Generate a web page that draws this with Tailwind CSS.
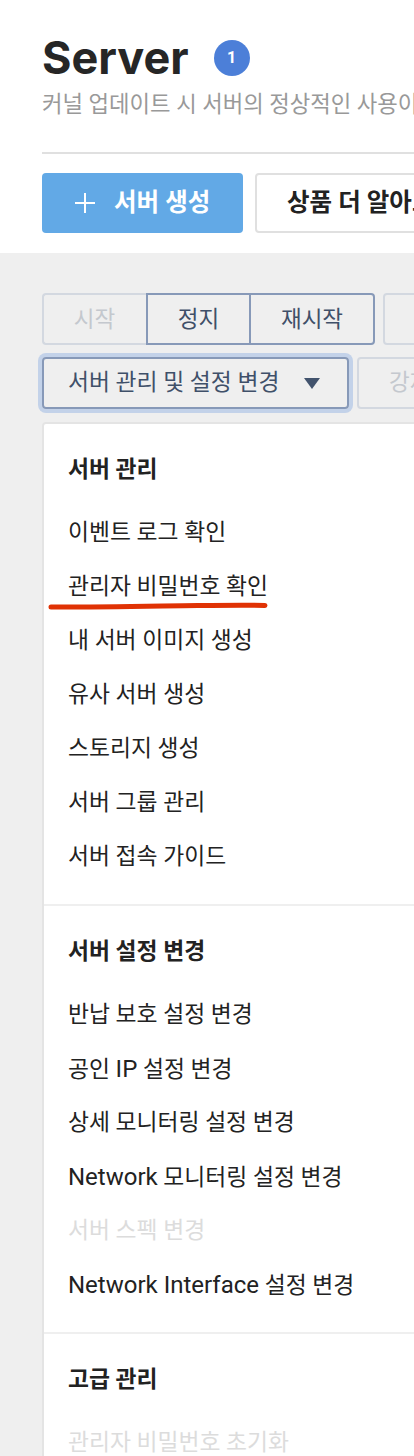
<!DOCTYPE html>
<html lang="ko">
<head>
  <meta charset="UTF-8" />
  <meta name="viewport" content="width=device-width, initial-scale=1.0"/>
  <title>Server</title>
  <script src="https://cdn.jsdelivr.net/npm/@tailwindcss/browser@4"></script>
</head>
<body class="bg-[#efefef] font-['Roboto','Noto_Sans_CJK_KR',sans-serif] text-[#222]">
  <div class="relative w-[414px] h-[1456px] overflow-hidden">
    <!-- header -->
    <header class="h-[253px] bg-white pl-[42px] pt-[30px]">
      <div class="flex items-center h-[56px] w-[500px]">
        <h1 class="font-['Inter',sans-serif] text-[45px] leading-[56px] font-bold text-[#262626]">Server</h1>
        <span class="ml-[25px] flex items-center justify-center w-[36px] h-[36px] rounded-full bg-[#4c7fd8] text-white text-[16px] font-bold">1</span>
      </div>
      <p class="mt-[5px] w-[600px] h-[26px] text-[22.3px] leading-[26px] text-[#999] whitespace-nowrap">커널 업데이트 시 서버의 정상적인 사용이 제한될 수 있습니다</p>
      <div class="mt-[35px] w-[500px] h-[2px] bg-[#e0e0e0]"></div>
      <div class="mt-[19px] flex gap-[12px] w-[600px]">
        <button class="flex items-center w-[201px] h-[60px] pl-[33px] rounded-[4px] bg-[#62a9e6] text-white text-[24.5px] font-semibold">
          <svg class="w-[20px] h-[20px] mr-[19px]" viewBox="0 0 20 20" fill="none" stroke="currentColor" stroke-width="2"><path d="M10 0v20M0 10h20"/></svg>
          서버 생성
        </button>
        <button class="w-[220px] h-[60px] pl-[30px] text-left whitespace-nowrap rounded-[4px] border-2 border-[#e0e0e0] bg-white text-[24.5px] font-semibold text-[#222]">상품 더 알아보기</button>
      </div>
    </header>

    <!-- toolbar -->
    <div class="pl-[42px] pt-[40px] w-[700px]">
      <div class="flex h-[52px]">
        <button class="w-[105px] h-[52px] pr-[2px] pt-[2px] rounded-l-[4px] border-2 border-r-0 border-[#d3d8e0] text-[22.5px] text-[#c4c8ce]">시작</button>
        <button class="w-[105px] h-[52px] pt-[2px] -ml-[1px] border-2 border-[#8799b8] text-[22.5px] text-[#3f5069]">정지</button>
        <button class="w-[126px] h-[52px] pt-[2px] -ml-[2px] rounded-r-[4px] border-2 border-[#8799b8] text-[22.5px] text-[#3f5069]">재시작</button>
        <button class="ml-[8px] w-[120px] h-[52px] rounded-[4px] border-2 border-[#d3d8e0]"></button>
      </div>
      <div class="flex mt-[12px] h-[52px]">
        <button class="flex items-center w-[307px] h-[52px] pl-[24px] rounded-[4px] border-2 border-[#8799b8] ring-4 ring-[#c3d2e9] text-[22.8px] text-[#3f5069] whitespace-nowrap">
          서버 관리 및 설정 변경
          <svg class="ml-[25px] w-[16px] h-[11px]" viewBox="0 0 16 11" fill="#42536d"><path d="M0 0h16L8 11z"/></svg>
        </button>
        <button class="ml-[8px] w-[140px] h-[52px] pl-[30px] text-left rounded-[4px] border-2 border-[#d3d8e0] text-[22.5px] text-[#c4c8ce] whitespace-nowrap">강제 정지</button>
      </div>
    </div>

    <!-- dropdown menu -->
    <div class="ml-[42px] mt-[13px] w-[500px] rounded-[4px] border-2 border-[#e4e4e4] bg-white text-[22.8px] leading-[54px] whitespace-nowrap">
      <section class="pl-[24px] pt-[19px] pb-[20px] border-b-2 border-[#efefef]">
        <h2 class="h-[54px] font-bold mb-[9px]">서버 관리</h2>
        <p class="h-[54px]">이벤트 로그 확인</p>
        <p class="h-[54px]">관리자 비밀번호 확인</p>
        <p class="h-[54px]">내 서버 이미지 생성</p>
        <p class="h-[54px]">유사 서버 생성</p>
        <p class="h-[54px]">스토리지 생성</p>
        <p class="h-[54px]">서버 그룹 관리</p>
        <p class="h-[54px]">서버 접속 가이드</p>
      </section>
      <section class="pl-[24px] pt-[19px] pb-[20px] border-b-2 border-[#efefef]">
        <h2 class="h-[54px] font-bold mb-[9px]">서버 설정 변경</h2>
        <p class="h-[54px]">반납 보호 설정 변경</p>
        <p class="h-[54px]">공인 <span class="text-[24px]">IP</span> 설정 변경</p>
        <p class="h-[54px]">상세 모니터링 설정 변경</p>
        <p class="h-[54px]"><span class="text-[24px]">Network</span> 모니터링 설정 변경</p>
        <p class="h-[54px] text-[#dcdcdc]">서버 스펙 변경</p>
        <p class="h-[54px]"><span class="text-[24px]">Network Interface</span> 설정 변경</p>
      </section>
      <section class="pl-[24px] pt-[19px]">
        <h2 class="h-[54px] font-bold mb-[9px]">고급 관리</h2>
        <p class="h-[54px] text-[#dcdcdc]">관리자 비밀번호 초기화</p>
      </section>
    </div>

    <!-- hand drawn underline -->
    <svg class="absolute left-[48px] top-[600px] w-[222px] h-[12px]" viewBox="0 0 222 12" fill="none">
      <path d="M3 7C50 7 100 6 150 5.500S205 5 217 5.500" stroke="#e03204" stroke-width="5" stroke-linecap="round"/>
    </svg>
  </div>
</body>
</html>
